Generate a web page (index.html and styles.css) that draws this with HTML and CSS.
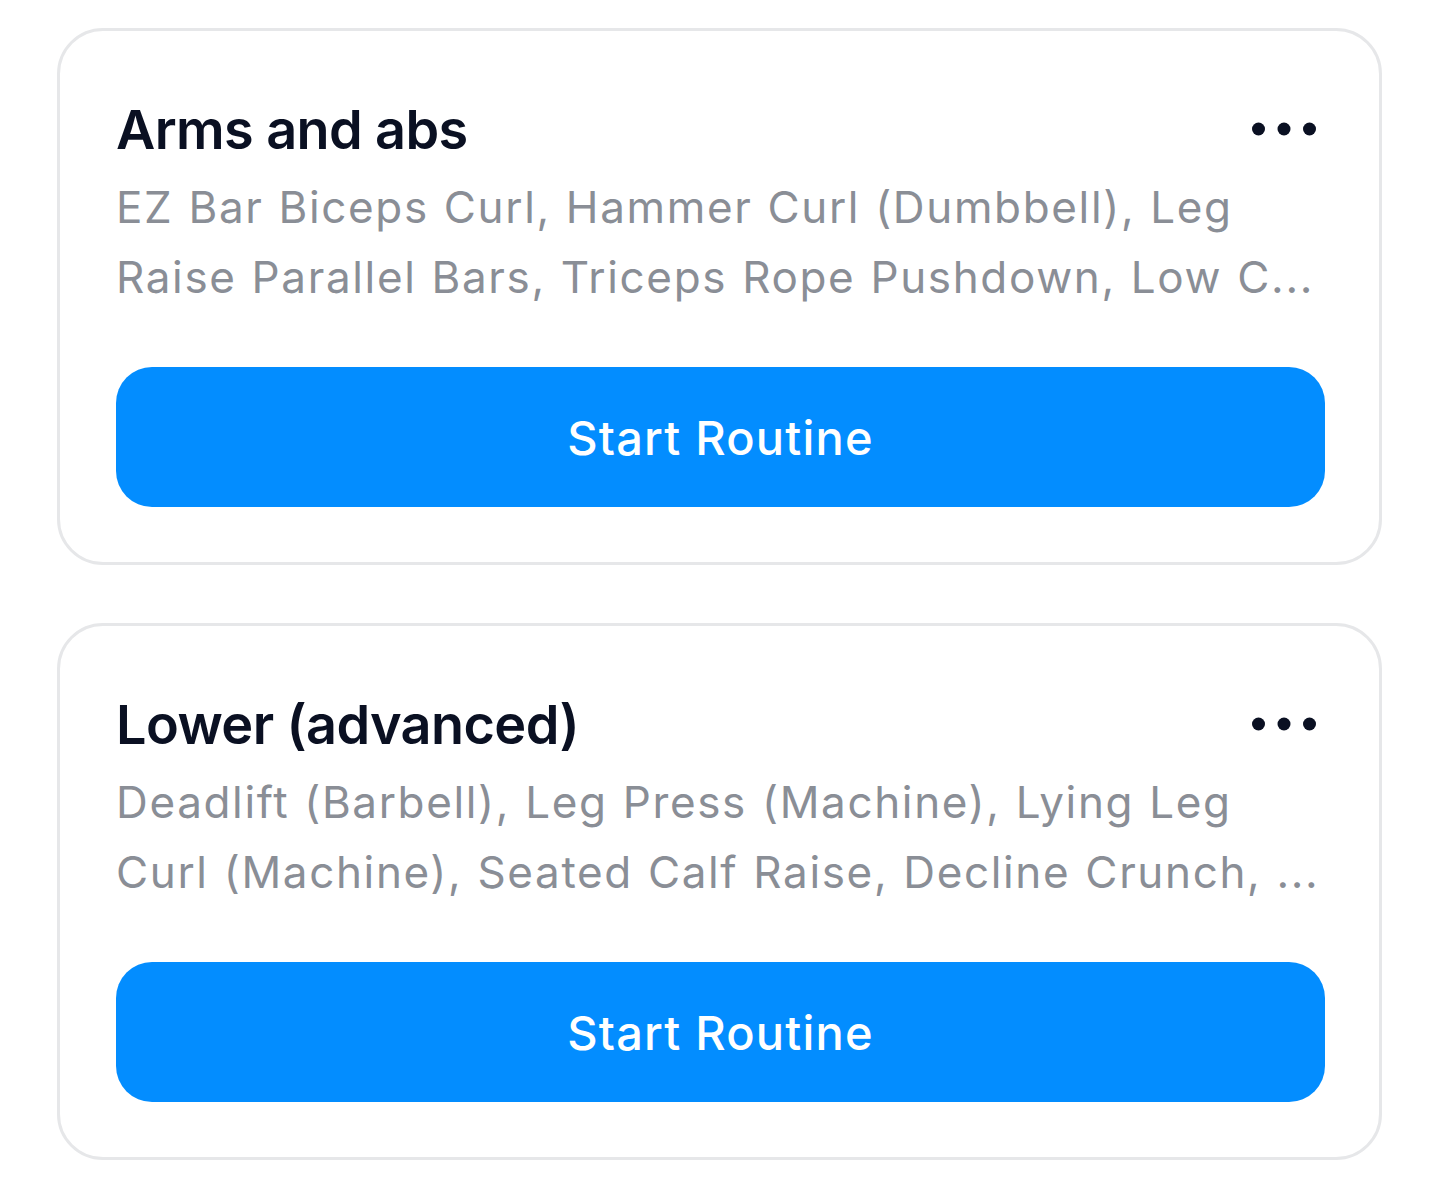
FILE: index.html
```html
<!DOCTYPE html>
<html lang="en">
<head>
<meta charset="utf-8">
<title>Routines</title>
<link rel="stylesheet" href="styles.css">
</head>
<body>
<main class="list">
  <section class="card">
    <div class="card-head">
      <h2 class="title">Arms and abs</h2>
      <button class="more" aria-label="More options">
        <svg width="66" height="20" viewBox="0 0 66 20"><circle cx="7.5" cy="10" r="6.5"/><circle cx="33" cy="10" r="6.5"/><circle cx="58.5" cy="10" r="6.5"/></svg>
      </button>
    </div>
    <p class="desc">EZ Bar Biceps Curl, Hammer Curl (Dumbbell), Leg Raise Parallel Bars, Triceps Rope Pushdown, Low C...</p>
    <button class="start">Start Routine</button>
  </section>
  <section class="card">
    <div class="card-head">
      <h2 class="title">Lower (advanced)</h2>
      <button class="more" aria-label="More options">
        <svg width="66" height="20" viewBox="0 0 66 20"><circle cx="7.5" cy="10" r="6.5"/><circle cx="33" cy="10" r="6.5"/><circle cx="58.5" cy="10" r="6.5"/></svg>
      </button>
    </div>
    <p class="desc">Deadlift (Barbell), Leg Press (Machine), Lying Leg Curl (Machine), Seated Calf Raise, Decline Crunch, ...</p>
    <button class="start">Start Routine</button>
  </section>
</main>
</body>
</html>
```
FILE: styles.css
```css
html, body {
  margin: 0;
  padding: 0;
  background: #ffffff;
}
body {
  font-family: Inter, "Noto Sans", "Liberation Sans", sans-serif;
}
.list {
  display: flex;
  flex-direction: column;
  gap: 58px;
  padding: 28px 58px 0 57px;
}
.card {
  border: 3px solid #e6e7e9;
  border-radius: 46px;
  padding: 66px 54px 55px 56px;
  display: flex;
  flex-direction: column;
}
.card-head {
  display: flex;
  align-items: center;
  justify-content: space-between;
}
.title {
  margin: 0;
  font-size: 54px;
  font-weight: 600;
  line-height: 65px;
  color: #0a1022;
  letter-spacing: -0.6px;
}
.more {
  border: 0;
  background: none;
  padding: 0;
  margin-right: 8px;
  margin-top: -2px;
  display: flex;
  fill: #0a1022;
}
.desc {
  margin: 10px 0 0 0;
  height: 140px;
  font-size: 44px;
  line-height: 70px;
  letter-spacing: 1.65px;
  word-spacing: 1px;
  color: #8a8e96;
}
.start {
  margin-top: 55px;
  height: 140px;
  border: 0;
  border-radius: 36px;
  background: #038dff;
  color: #ffffff;
  font-family: Inter, "Noto Sans", "Liberation Sans", sans-serif;
  font-size: 47px;
  font-weight: 500;
  letter-spacing: 1.2px;
  cursor: pointer;
}
```
